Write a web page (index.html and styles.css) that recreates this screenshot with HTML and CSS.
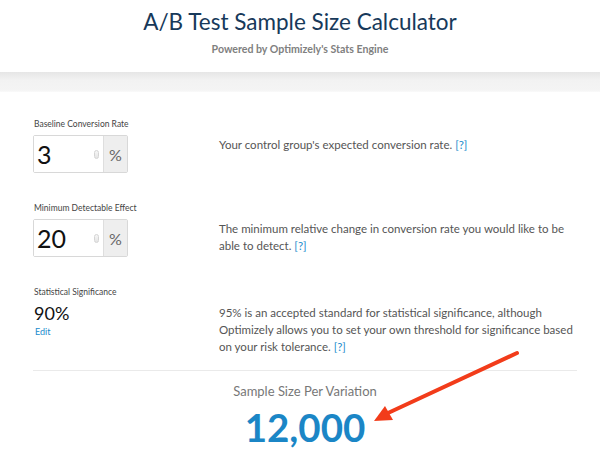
FILE: index.html
```html
<!DOCTYPE html>
<html lang="en">
	<head>
		<meta charset="UTF-8" />
		<meta name="viewport" content="width=device-width, initial-scale=1.0" />
		<title>A/B Test Sample Size Calculator</title>
		<link rel="stylesheet" href="styles.css">
	</head>
	<body>
		<header class="header">
			<h1>A/B Test Sample Size Calculator</h1>
			<p class="sub">Powered by Optimizely's Stats Engine</p>
		</header>
		<div class="band"></div>

		<main class="calc">
			<div class="row">
				<div class="field">
					<label class="label">Baseline Conversion Rate</label>
					<div class="input-group">
						<input class="num" type="text" value="3" />
						<span class="spin"></span>
						<span class="addon">%</span>
					</div>
				</div>
				<p class="desc">Your control group's expected conversion rate. <a href="#">[?]</a></p>
			</div>

			<div class="row">
				<div class="field">
					<label class="label">Minimum Detectable Effect</label>
					<div class="input-group">
						<input class="num" type="text" value="20" />
						<span class="spin"></span>
						<span class="addon">%</span>
					</div>
				</div>
				<p class="desc">The minimum relative change in conversion rate you would like to be able to detect. <a href="#">[?]</a></p>
			</div>

			<div class="row">
				<div class="field">
					<label class="label">Statistical Significance</label>
					<div class="sig">90%</div>
					<a class="edit" href="#">Edit</a>
				</div>
				<p class="desc">95% is an accepted standard for statistical significance, although Optimizely allows you to set your own threshold for significance based on your risk tolerance. <a href="#">[?]</a></p>
			</div>

			<div class="result">
				<p class="result-label">Sample Size Per Variation</p>
				<p class="result-num">12,000</p>
			</div>
		</main>

		<!-- annotation arrow -->
		<svg class="arrow" width="600" height="466" viewBox="0 0 600 466">
			<line x1="517" y1="353" x2="388" y2="413" stroke="#f23c1a" stroke-width="4" stroke-linecap="round" />
			<polygon points="374,421 385,406 393,420" fill="#f23c1a" />
		</svg>
	</body>
</html>
```

FILE: styles.css
```css
* {
	margin: 0;
	padding: 0;
	box-sizing: border-box;
	font-family: "Lato", "Open Sans", sans-serif;
}

body {
	width: 600px;
	height: 466px;
	overflow: hidden;
	background: #fff;
	position: relative;
}

a {
	color: #1a8ccd;
	text-decoration: none;
}

.header {
	height: 72px;
	text-align: center;
	padding-top: 8px;
}

.header h1 {
	font-size: 22.5px;
	font-weight: 400;
	line-height: 28px;
	color: #17395a;
}

.sub {
	margin-top: 7px;
	font-size: 10.6px;
	font-weight: 700;
	color: #808080;
}

/* gray strip under the header */
.band {
	height: 20px;
	background: linear-gradient(#e6e6e6, #f2f2f2 40%, #f4f4f4 90%, #fafafa);
}

.calc {
	margin: 26px 23px 0 33px;
}

.row {
	display: flex;
	height: 84px;
}

.field {
	width: 186px;
	flex: none;
}

.label {
	display: block;
	font-size: 8.5px;
	line-height: 12px;
	color: #444;
	margin-bottom: 5px;
	padding-left: 1px;
}

.input-group {
	display: flex;
	width: 95px;
	height: 38px;
	border: 1px solid #d8d8d8;
	border-radius: 2px;
	position: relative;
}

.num {
	width: 69px;
	border: none;
	outline: none;
	padding-left: 3px;
	font-size: 25px;
	color: #111;
	background: #fff;
}

/* number spinner */
.spin {
	position: absolute;
	left: 60px;
	top: 14px;
	width: 5px;
	height: 9px;
	border: 1px solid #d4d4d4;
	border-radius: 3px;
	background: linear-gradient(#f6f6f6, #e4e4e4);
}

.addon {
	flex: 1;
	display: flex;
	align-items: center;
	justify-content: center;
	background: #eeeeee;
	border-left: 1px solid #dedede;
	font-size: 16px;
	color: #666;
}

.sig {
	font-size: 18px;
	line-height: 22px;
	color: #111;
	margin-top: -1px;
	padding-left: 1px;
}

.edit {
	display: block;
	font-size: 9px;
	line-height: 12px;
	margin-top: 2px;
	padding-left: 2px;
}

.desc {
	padding-top: 18px;
	font-size: 11.5px;
	line-height: 17px;
	color: #555;
}

.result {
	border-top: 1px solid #eaeaea;
	text-align: center;
	padding-top: 12px;
}

.result-label {
	font-size: 13px;
	line-height: 16px;
	color: #777;
}

.result-num {
	margin-top: 4px;
	font-size: 38.5px;
	line-height: 48px;
	font-weight: 700;
	color: #1b86c6;
}

.arrow {
	position: absolute;
	left: 0;
	top: 0;
	pointer-events: none;
}
```
